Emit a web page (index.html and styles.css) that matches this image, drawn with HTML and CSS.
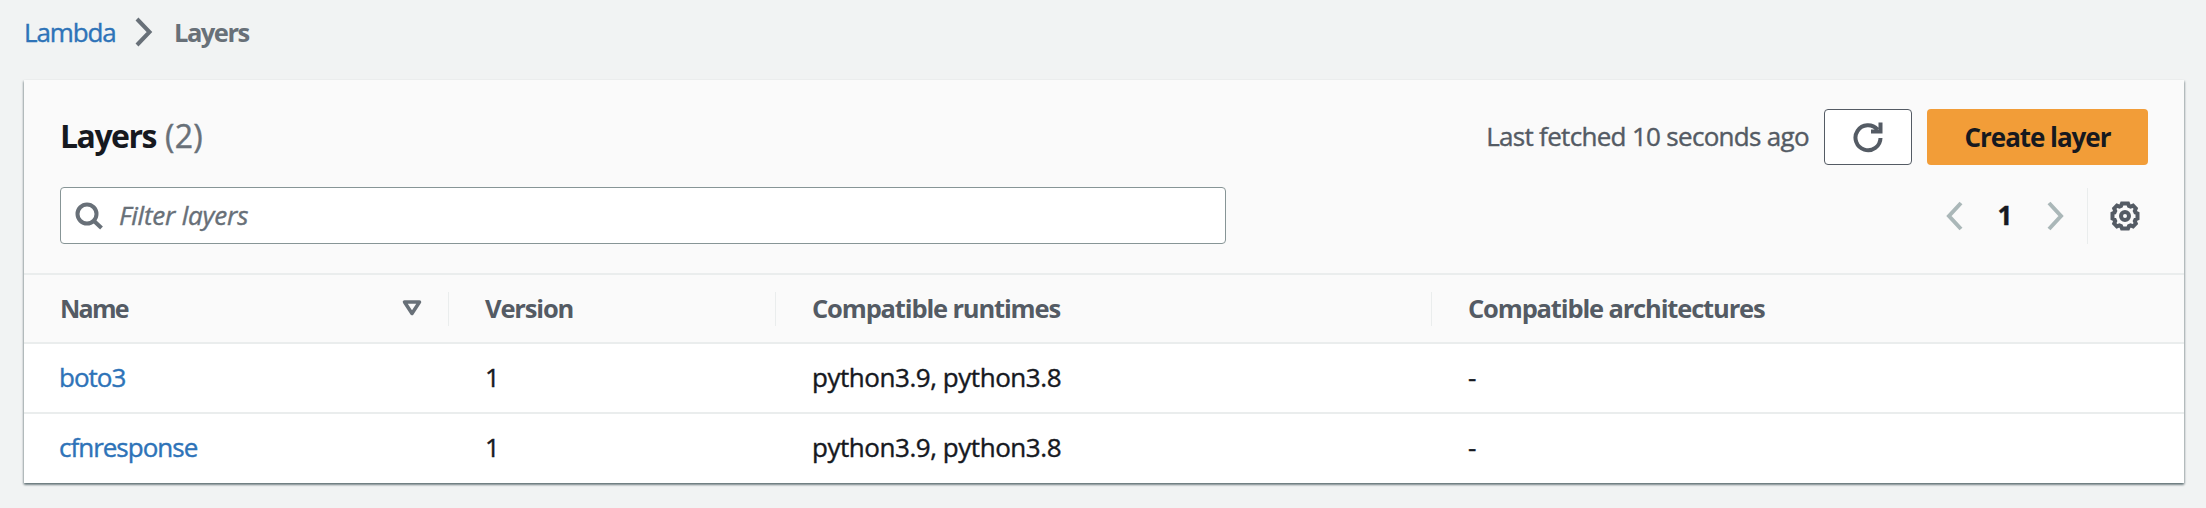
FILE: index.html
```html
<!DOCTYPE html>
<html lang="en">
<head>
<meta charset="utf-8">
<title>Layers - Lambda</title>
<link rel="stylesheet" href="styles.css">
</head>
<body>
<nav class="breadcrumb">
  <a class="crumb-link" href="#">Lambda</a>
  <svg class="crumb-sep" width="18" height="30" viewBox="0 0 18 30"><path d="M2 2 14.500 15 2 28"/></svg>
  <span class="crumb-current">Layers</span>
</nav>
<main class="card">
  <header class="card-header">
    <div class="title-row">
      <h1 class="title">Layers</h1>
      <span class="count">(2)</span>
      <span class="fetched">Last fetched 10 seconds ago</span>
      <button class="btn btn-refresh" aria-label="Refresh">
        <svg width="32" height="32" viewBox="0 0 32 32"><path d="M28.500 17A12.500 12.500 0 1 1 25.500 8.600M28.500 1.500V10.500H19"/></svg>
      </button>
      <button class="btn btn-primary">Create layer</button>
    </div>
    <div class="tools-row">
      <div class="filter">
        <svg width="28" height="28" viewBox="0 0 28 28"><circle cx="12" cy="12" r="9.500"/><path d="M18.500 18.500 26.500 26"/></svg>
        <span class="placeholder">Filter layers</span>
      </div>
      <div class="pager">
        <svg class="arrow" width="18" height="30" viewBox="0 0 18 30"><path d="M16 2 4 15 16 28"/></svg>
        <b class="page">1</b>
        <svg class="arrow" width="18" height="30" viewBox="0 0 18 30"><path d="M2 2 14 15 2 28"/></svg>
      </div>
      <div class="settings">
        <svg width="30" height="30" viewBox="0 0 30 30"><path d="M12 2.500h6l1 2.500 1.600.7 2.500-1 2.700 2.700-1 2.500.7 1.600 2 1v5l-2 1-.7 1.600 1 2.500-2.700 2.700-2.500-1-1.600.7-1 2.500h-6l-1-2.500-1.600-.7-2.500 1-2.700-2.700 1-2.500-.7-1.600-2-1v-5l2-1 .7-1.600-1-2.500 2.700-2.700 2.500 1 1.600-.7z"/><circle cx="15" cy="15" r="4"/></svg>
      </div>
    </div>
  </header>
  <div class="row head">
    <div class="cell"><span class="t-name">Name</span><svg class="sort" width="20" height="16" viewBox="0 0 20 16"><path d="M2.500 2h15L10 13.500z"/></svg></div>
    <div class="cell">Version</div>
    <div class="cell">Compatible runtimes</div>
    <div class="cell">Compatible architectures</div>
  </div>
  <div class="row">
    <div class="cell"><a href="#">boto3</a></div>
    <div class="cell">1</div>
    <div class="cell"><span class="t-python">python3.9, python3.8</span></div>
    <div class="cell">-</div>
  </div>
  <div class="row">
    <div class="cell"><a href="#">cfnresponse</a></div>
    <div class="cell">1</div>
    <div class="cell"><span class="t-python">python3.9, python3.8</span></div>
    <div class="cell">-</div>
  </div>
</main>
</body>
</html>
```
FILE: styles.css
```css
* { box-sizing: border-box; }
body {
  margin: 0;
  height: 508px;
  overflow: hidden;
  background: #f1f3f3;
  color: #16191f;
  font: 26px/36px "Open Sans", "Noto Sans", sans-serif;
  -webkit-text-stroke: .4px currentColor;
  white-space: nowrap;
}
a { color: #2e73b8; text-decoration: none; }
svg { display: block; flex: none; fill: none; stroke: #545b64; stroke-width: 4; }

.breadcrumb { display: flex; align-items: center; height: 80px; padding: 0 0 16px 24px; }
.crumb-link { width: 111px; padding-bottom: 1px; letter-spacing: -1.15px; }
.crumb-sep { stroke: #687078; margin-right: 21px; }
.crumb-current { padding-bottom: 1px; color: #687078; font-size: 25.5px; font-weight: 700; letter-spacing: -1.5px; -webkit-text-stroke: 0; }

.card {
  width: 2160px;
  height: 403px;
  margin-left: 24px;
  background: #fff;
  box-shadow: 0 2px 2px 0 rgba(0, 28, 36, .4), 1px 1px 2px 0 rgba(0, 28, 36, .2), -1px 1px 2px 0 rgba(0, 28, 36, .2);
}
.card-header { height: 193px; padding: 29px 36px 0; background: #fafafa; }
.title-row { display: flex; align-items: center; height: 56px; }
.title { margin: 0; width: 105px; padding-bottom: 2px; font-size: 32px; font-weight: 700; letter-spacing: -1.5px; -webkit-text-stroke: 0; }
.count { padding-bottom: 2px; color: #687078; font-size: 32px; letter-spacing: .3px; }
.fetched { margin-left: auto; margin-right: 15px; padding-bottom: 2px; color: #545b64; letter-spacing: -.69px; }
.btn {
  display: flex;
  align-items: center;
  justify-content: center;
  height: 56px;
  padding: 0;
  border-radius: 4px;
  font: inherit;
}
.btn-refresh { width: 88px; border: 1px solid #545b64; background: #fff; }
.btn-primary { width: 221px; margin-left: 15px; border: 0; background: #f29d38; color: #16191f; font-weight: 700; letter-spacing: -1.05px; -webkit-text-stroke: 0; }

.tools-row { display: flex; align-items: center; height: 57px; margin-top: 22px; }
.filter { display: flex; align-items: center; width: 1166px; height: 57px; padding-left: 14px; border: 1px solid #879596; border-radius: 4px; background: #fff; }
.filter svg { stroke: #687078; }
.placeholder { margin-left: 16px; padding-bottom: 1px; color: #687078; font-style: italic; letter-spacing: -.2px; }
.pager { display: flex; align-items: center; justify-content: space-between; width: 120px; margin-left: auto; }
.page { padding-bottom: 2px; }
.arrow { stroke: #aab7b8; }
.settings { display: flex; align-items: center; height: 56px; margin-left: 22px; padding: 0 8px 0 22px; border-left: 1px solid #eaeded; }

.row { display: grid; grid-template-columns: 425px 327px 656px 752px; height: 70px; border-top: 2px solid #eaeded; }
.cell { display: flex; align-items: center; padding: 0 0 2px 36px; }
.cell a { margin-left: -1px; letter-spacing: -1px; }
.head { height: 69px; background: #fafafa; color: #545b64; font-size: 25.5px; font-weight: 700; letter-spacing: -1.15px; -webkit-text-stroke: 0; }
.head .cell { align-self: center; height: 34px; border-right: 1px solid #eaeded; }
.head .cell:last-child { border-right: 0; }
.sort { margin: 0 26px 0 auto; stroke: #687078; stroke-width: 3.500; stroke-linejoin: round; }
.t-name { font-size: 25px; letter-spacing: -1.7px; }
.t-python { letter-spacing: -.45px; }
```
